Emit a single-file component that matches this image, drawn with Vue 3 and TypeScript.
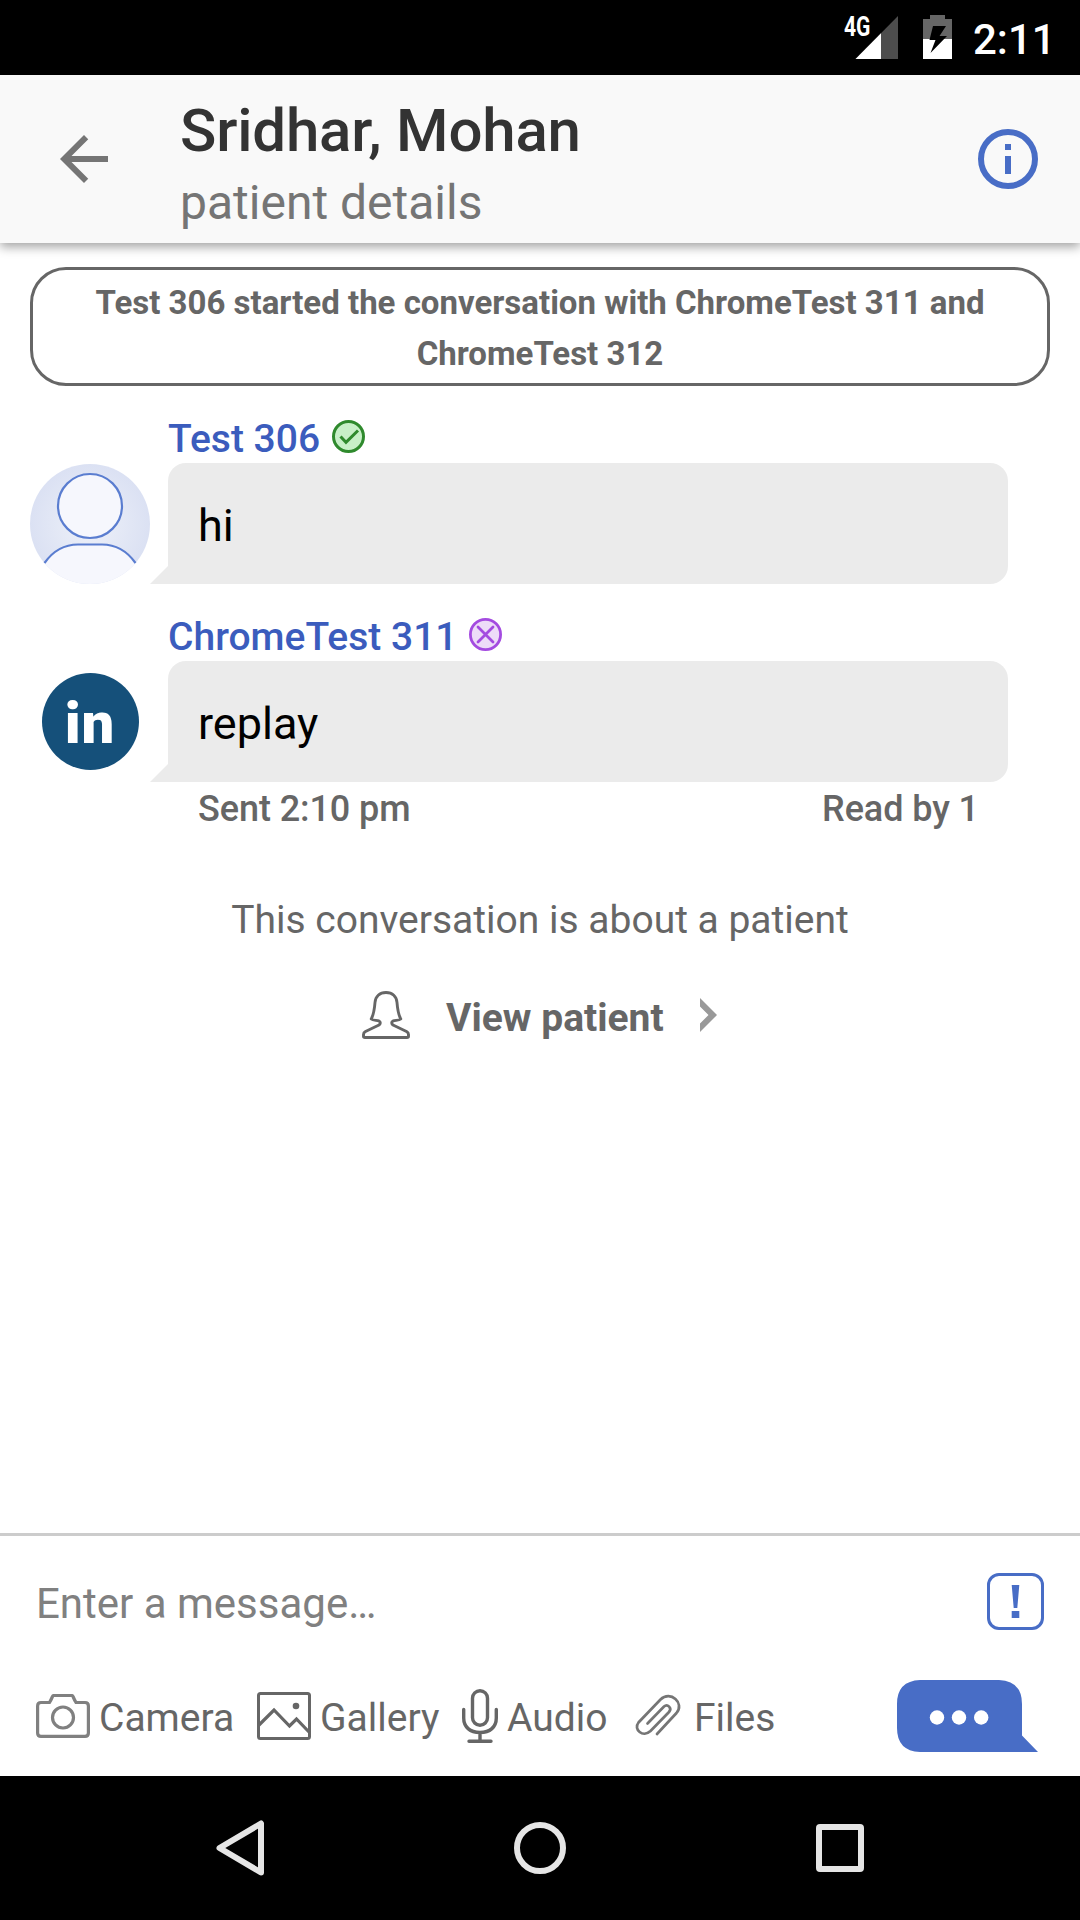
<script setup lang="ts">
interface Message {
  author: string
  text: string
  status: 'available' | 'unavailable'
  avatar: 'person' | 'linkedin'
}

const messages: Message[] = [
  { author: 'Test 306', text: 'hi', status: 'available', avatar: 'person' },
  { author: 'ChromeTest 311', text: 'replay', status: 'unavailable', avatar: 'linkedin' },
]
</script>

<template>
  <div class="screen">
    <div class="status-bar">
      <svg class="signal" width="56" height="46" viewBox="0 0 56 46">
        <path d="M53 1V44H10.500Z" fill="#4d4d4d" />
        <path d="M36 18.200V44H10.500Z" fill="#fff" />
      </svg>
      <span class="network">4G</span>
      <svg class="battery" width="29" height="44" viewBox="0 0 29 44">
        <path d="M7 0H22V4H29V24H0V4H7Z" fill="#666" />
        <path d="M0 24H29V44H0Z" fill="#fff" />
        <path d="M10 11H23L16.500 21H24L7.500 38L12.500 25H6.500Z" fill="#000" />
      </svg>
      <span class="clock">2:11</span>
    </div>

    <header class="app-bar">
      <svg class="back" width="72" height="72" viewBox="0 0 24 24">
        <path d="M20 11H7.830l5.590-5.590L12 4l-8 8 8 8 1.410-1.410L7.830 13H20z" fill="#757575" />
      </svg>
      <div class="titles">
        <h1>Sridhar, Mohan</h1>
        <p>patient details</p>
      </div>
      <svg class="info" width="72" height="72" viewBox="0 0 24 24">
        <circle cx="12" cy="12" r="9" fill="none" stroke="#486dc6" stroke-width="2" />
        <path d="M11 7h2v2h-2zM11 11h2v6h-2z" fill="#486dc6" />
      </svg>
    </header>

    <main class="thread">
      <div class="notice">
        Test 306 started the conversation with ChromeTest 311 and<br />ChromeTest 312
      </div>

      <section v-for="m in messages" :key="m.author" class="message">
        <div class="avatar">
          <svg v-if="m.avatar === 'person'" width="120" height="120" viewBox="0 0 120 120">
            <defs>
              <radialGradient id="halo">
                <stop offset="0" stop-color="#eef1f9" />
                <stop offset="1" stop-color="#dbe1f3" />
              </radialGradient>
              <clipPath id="disc"><circle cx="60" cy="60" r="60" /></clipPath>
            </defs>
            <circle cx="60" cy="60" r="60" fill="url(#halo)" />
            <g clip-path="url(#disc)">
              <path d="M14.500 99C23 87 35 80.500 48 80.500H72C85 80.500 97 87 105.500 99L110 125H10Z" fill="#f6f7fd" />
            </g>
            <path d="M14.500 99C23 87 35 80.500 48 80.500H72C85 80.500 97 87 105.500 99" fill="none" stroke="#5a7dd0" stroke-width="2.200" />
            <circle cx="60" cy="42" r="32" fill="#f6f7fd" stroke="#5a7dd0" stroke-width="2.200" />
          </svg>
          <div v-else class="linkedin"><span>in</span></div>
        </div>
        <div class="content">
          <div class="author">
            <span>{{ m.author }}</span>
            <svg v-if="m.status === 'available'" class="available" width="33" height="33" viewBox="0 0 33 33">
              <circle cx="16.500" cy="16.500" r="15" fill="#c8f0c8" stroke="#2f8a2d" stroke-width="3" />
              <path d="M8.500 16.500L14 22.300L26 10.500" fill="none" stroke="#2f8a2d" stroke-width="3" />
            </svg>
            <svg v-else width="33" height="33" viewBox="0 0 33 33">
              <circle cx="16.500" cy="16.500" r="15.100" fill="#eddcf8" stroke="#a44be0" stroke-width="2.800" />
              <path d="M9 9L24 24M24 9L9 24" fill="none" stroke="#a44be0" stroke-width="2.800" stroke-linecap="round" />
            </svg>
          </div>
          <div class="bubble">{{ m.text }}</div>
        </div>
      </section>

      <div class="receipt">
        <span>Sent 2:10 pm</span>
        <span>Read by 1</span>
      </div>

      <p class="about">This conversation is about a patient</p>

      <div class="view-patient">
        <svg width="48" height="48" viewBox="0 0 48 48">
          <path
            d="M24 1.500C17.500 1.500 13.500 5.500 13 11.500C12.500 18 12 23 9.200 28C11 29.500 14 29.200 17 30C18.800 30.800 18.600 32.800 17 34L3.500 40.500C1.800 41.500 1.500 42.200 1.500 43.500V45.500Q1.500 46.500 3 46.500H45Q46.500 46.500 46.500 45.500V43.500C46.500 42.200 46.200 41.500 44.500 40.500L31 34C29.400 32.800 29.200 30.800 31 30C34 29.200 37 29.500 38.800 28C36 23 35.500 18 35 11.500C34.500 5.500 30.500 1.500 24 1.500Z"
            fill="none" stroke="#666" stroke-width="2.900" stroke-linejoin="round" />
        </svg>
        <span>View patient</span>
        <svg class="chevron" width="17" height="34" viewBox="0 0 17 34">
          <path d="M0 0L17 17L0 34V25.500L8.500 17L0 8.500Z" fill="#999" />
        </svg>
      </div>
    </main>

    <footer class="composer">
      <div class="entry">
        <span class="placeholder">Enter a message…</span>
        <svg width="57" height="57" viewBox="0 0 57 57">
          <rect x="1.500" y="1.500" width="54" height="54" rx="10.500" fill="none" stroke="#486dc6" stroke-width="3" />
          <path d="M24.700 12H32.300L30.300 35H26.700ZM24.700 38H32.300V45H24.700Z" fill="#486dc6" />
        </svg>
      </div>
      <div class="toolbar">
        <div class="tool camera">
          <svg width="54" height="44" viewBox="0 0 54 44">
            <path d="M5 8.500H13.500Q15 6 16.500 2.500Q17 1.500 18 1.500H35.500Q36.500 1.500 37 2.500Q38.500 6 40 8.500H49Q52.400 8.500 52.400 12V39Q52.400 42.400 49 42.400H5Q1.600 42.400 1.600 39V12Q1.600 8.500 5 8.500Z" fill="none" stroke="#808080" stroke-width="3.200" />
            <circle cx="27" cy="23.500" r="10.500" fill="none" stroke="#808080" stroke-width="3.200" />
          </svg>
          <span>Camera</span>
        </div>
        <div class="tool gallery">
          <svg width="54" height="48" viewBox="0 0 54 48">
            <rect x="1.500" y="1.500" width="51" height="45" rx="2" fill="none" stroke="#666" stroke-width="3" />
            <path d="M2 33L17 18L32.500 34L39.500 27L52 40" fill="none" stroke="#666" stroke-width="3.200" />
            <circle cx="39" cy="14" r="3.300" fill="#666" />
          </svg>
          <span>Gallery</span>
        </div>
        <div class="tool audio">
          <svg width="36" height="54" viewBox="0 0 36 54" fill="none" stroke="#666" stroke-width="3.400" stroke-linecap="round">
            <rect x="10.500" y="1.700" width="15" height="34.500" rx="7.500" />
            <path d="M1.700 20.500V29C1.700 38 8 43.500 18 43.500C28 43.500 34.300 38 34.300 29V20.500M18 43.500V52.300M7 52.300H29" />
          </svg>
          <span>Audio</span>
        </div>
        <div class="tool files">
          <svg width="46" height="46" viewBox="0 0 46 46" fill="none" stroke="#757575" stroke-width="2.700" stroke-linecap="round">
            <path d="M12.500 29.500L29 12.500C32.500 9.500 37.500 14 34 18L15.500 37C8 44 -2 35.500 3.500 28.500L25.500 5.500C35.500 -4 50 9 41.500 19L22 40" />
          </svg>
          <span>Files</span>
        </div>
        <svg class="send" width="141" height="72" viewBox="0 0 141 72">
          <path d="M23 0H102Q125 1 125 24V55.500L141 72H23Q0 71 0 48V24Q0 1 23 0Z" fill="#486dc6" />
          <g fill="#fff">
            <circle cx="40" cy="37.500" r="7.200" />
            <circle cx="62" cy="37.500" r="7.200" />
            <circle cx="84.200" cy="37.500" r="7.200" />
          </g>
        </svg>
      </div>
    </footer>

    <nav class="nav-bar">
      <svg width="56" height="60" viewBox="0 0 56 60">
        <path d="M47 5.500V54.500L5.500 30Z" fill="none" stroke="#e5e5e5" stroke-width="6" stroke-linejoin="round" />
      </svg>
      <svg width="52" height="52" viewBox="0 0 52 52">
        <circle cx="26" cy="26" r="23" fill="none" stroke="#e5e5e5" stroke-width="6" />
      </svg>
      <svg width="48" height="48" viewBox="0 0 48 48">
        <rect x="3" y="3" width="42" height="42" rx="1" fill="none" stroke="#e5e5e5" stroke-width="6" />
      </svg>
    </nav>
  </div>
</template>

<style>
body {
  margin: 0;
  background: #fff;
}
</style>

<style scoped>
.screen {
  display: flex;
  flex-direction: column;
  width: 1080px;
  height: 1920px;
  overflow: hidden;
  background: #fff;
  font-family: Roboto, sans-serif;
  color: #666;
}
svg {
  display: block;
  flex: none;
}
h1,
p {
  margin: 0;
}
.status-bar {
  position: relative;
  display: flex;
  align-items: flex-start;
  flex: none;
  height: 75px;
  background: #000;
  color: #fff;
}
.signal {
  margin: 15px 0 0 845px;
}
.network {
  position: absolute;
  left: 844px;
  top: 12px;
  font: 700 27px/30px Roboto, sans-serif;
  transform: scaleX(0.78);
  transform-origin: left;
}
.battery {
  margin: 15px 0 0 22px;
}
.clock {
  margin: 0 0 0 21px;
  padding-top: 1px;
  font-size: 42px;
  line-height: 77px;
  font-weight: 500;
}
.app-bar {
  position: relative;
  z-index: 1;
  display: flex;
  align-items: center;
  flex: none;
  height: 168px;
  padding: 0 36px 0 48px;
  box-sizing: border-box;
  background: #f9f9f9;
  box-shadow: 0 4px 10px rgba(0, 0, 0, 0.36);
}
.titles {
  flex: 1;
  align-self: flex-start;
  padding: 20px 0 0 60px;
}
h1 {
  font-size: 60px;
  line-height: 72px;
  font-weight: 500;
  letter-spacing: -0.18px;
  color: #333;
}
.titles p {
  margin-top: 8px;
  font-size: 48px;
  line-height: 56px;
  color: #757575;
}
.thread {
  flex: 1;
  padding: 24px 30px 0;
}
.notice {
  box-sizing: border-box;
  height: 119px;
  padding-top: 7px;
  border: 3px solid #666;
  border-radius: 36px;
  font-size: 33px;
  line-height: 51px;
  font-weight: 700;
  text-align: center;
}
.message {
  display: flex;
  gap: 18px;
  margin-top: 29px;
}
.avatar {
  width: 120px;
  padding-top: 49px;
}
.linkedin {
  width: 97px;
  height: 97px;
  margin: 11px 0 0 11.5px;
  border-radius: 50%;
  background: #15507a;
  color: #fff;
  font-size: 58px;
  line-height: 101px;
  font-weight: 900;
  letter-spacing: 0.8px;
  text-align: center;
}
.content {
  width: 840px;
}
.author {
  display: flex;
  gap: 11px;
  height: 48px;
  font-size: 39px;
  line-height: 48px;
  font-weight: 500;
  color: #3b5cbd;
}
.author svg {
  margin-top: 5px;
}
.author .available {
  margin-left: 1px;
}
.bubble {
  position: relative;
  box-sizing: border-box;
  height: 121px;
  padding: 4px 30px 0;
  border-radius: 18px 18px 18px 0;
  background: #ebebeb;
  font-size: 45px;
  line-height: 117px;
  color: #000;
}
.bubble::before {
  content: '';
  position: absolute;
  left: -18px;
  bottom: 0;
  width: 18px;
  height: 18px;
  background: #ebebeb;
  clip-path: polygon(100% 0, 100% 100%, 0 100%);
}
.receipt {
  display: flex;
  justify-content: space-between;
  margin: 0 71px 0 168px;
  font-size: 36px;
  line-height: 54px;
  font-weight: 500;
  letter-spacing: -0.08px;
}
.about {
  margin-top: 60px;
  font-size: 39px;
  line-height: 48px;
  text-align: center;
}
.view-patient {
  display: flex;
  margin: 47px 0 0 332px;
  font-size: 39px;
  line-height: 55px;
  font-weight: 700;
}
.view-patient span {
  width: 254px;
  margin-left: 36px;
}
.chevron {
  margin-top: 7px;
}
.composer {
  flex: none;
  box-sizing: border-box;
  height: 243px;
  border-top: 3px solid #ccc;
}
.entry {
  display: flex;
  align-items: center;
  justify-content: space-between;
  height: 131px;
  padding: 0 36px;
}
.placeholder {
  padding-top: 4px;
  font-size: 42px;
  color: #808080;
}
.toolbar {
  display: flex;
  height: 101px;
  padding-left: 36px;
  font-size: 39px;
  line-height: 103px;
}
.tool {
  display: flex;
  align-items: center;
  height: 101px;
}
.camera,
.gallery {
  gap: 9px;
}
.camera {
  width: 221px;
}
.camera svg {
  margin-top: -3px;
}
.gallery {
  width: 205px;
}
.gallery svg {
  margin-top: -3px;
}
.audio {
  width: 173px;
  gap: 9px;
}
.audio svg {
  margin-top: -3px;
}
.tool span {
  padding-top: 1px;
}
.files {
  width: 262px;
  gap: 13px;
}
.files svg {
  margin-top: -1px;
}
.send {
  margin-top: 13px;
}
.nav-bar {
  display: grid;
  grid-template-columns: 300px 302px 48px;
  align-items: center;
  flex: none;
  box-sizing: border-box;
  height: 144px;
  padding-left: 214px;
  background: #000;
}
</style>
